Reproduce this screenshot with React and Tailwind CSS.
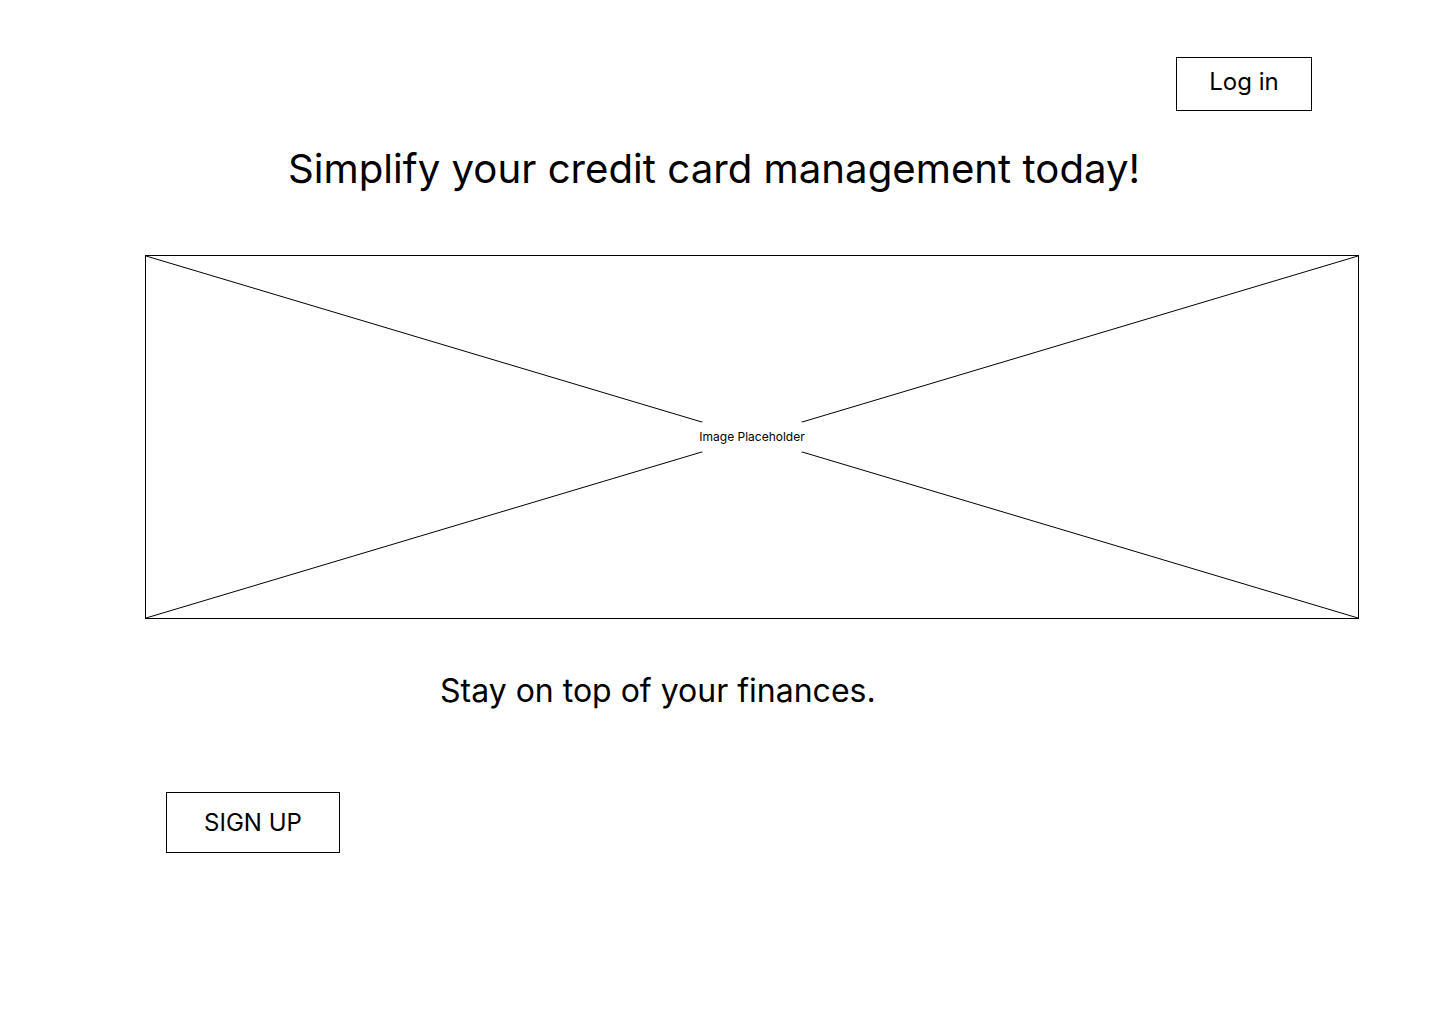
export default function App() {
  return (
    <div
      className="flex h-[1024px] w-[1440px] flex-col bg-white text-black"
      style={{ fontFamily: 'Inter, "Noto Sans", sans-serif' }}
    >
      <div className="flex justify-end pr-[128px] pt-[57px]">
        <button className="flex h-[54px] w-[136px] items-center justify-center border border-black bg-white pb-[4px] text-[24px] leading-none">
          Log in
        </button>
      </div>

      <h1 className="mt-[34px] pl-[288px] text-[40.2px] font-normal leading-[48px]">
        Simplify your credit card management today!
      </h1>

      {/* image placeholder */}
      <div className="relative ml-[145px] mt-[62px] flex h-[364px] w-[1214px] items-center justify-center border border-black">
        <svg
          className="absolute inset-0 h-full w-full"
          viewBox="0 0 1212 362"
          preserveAspectRatio="none"
        >
          <line x1="0" y1="0" x2="1212" y2="362" stroke="black" strokeWidth="1" vectorEffect="non-scaling-stroke" />
          <line x1="1212" y1="0" x2="0" y2="362" stroke="black" strokeWidth="1" vectorEffect="non-scaling-stroke" />
        </svg>
        <span className="relative flex h-[30px] w-[100px] items-center justify-center whitespace-nowrap bg-white text-center text-[12px] leading-none">
          Image Placeholder
        </span>
      </div>

      <p className="mt-[52px] pl-[440px] text-[32px] leading-[40px]">Stay on top of your finances.</p>

      <button className="ml-[166px] mt-[81px] flex h-[61px] w-[174px] items-center justify-center border border-black bg-white text-[24px] leading-none">
        SIGN UP
      </button>
    </div>
  )
}
